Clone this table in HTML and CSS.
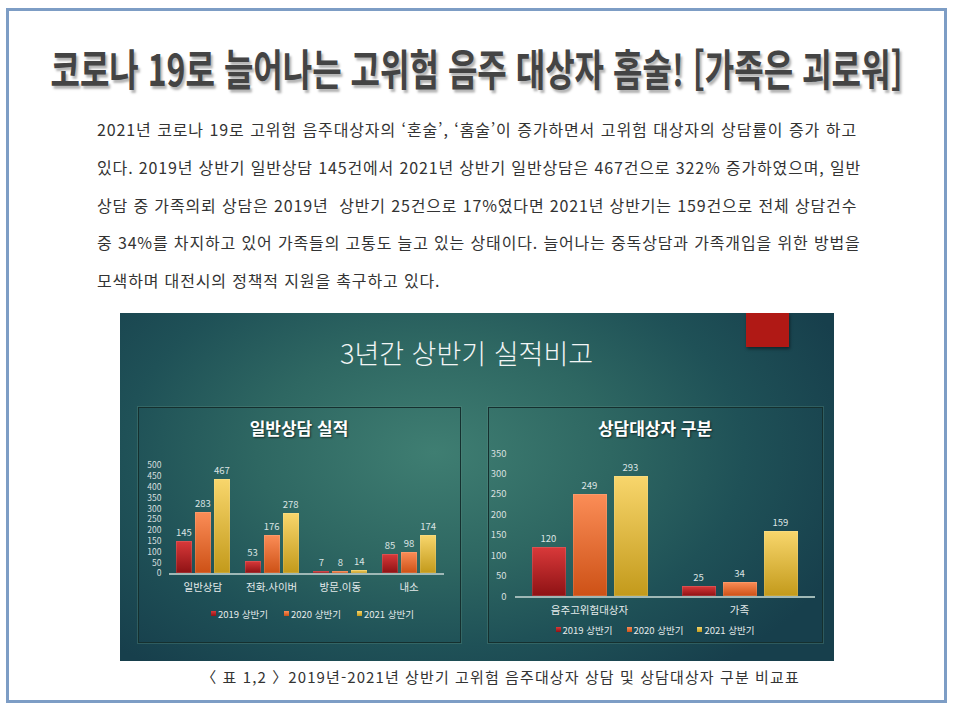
FILE: index.html
```html
<!DOCTYPE html>
<html lang="ko">
<head>
<meta charset="utf-8">
<title>코로나 19로 늘어나는 고위험 음주 대상자 홈술</title>
<link rel="stylesheet" href="styles.css">
</head>
<body>
<div class="frame">
  <h1 class="headline"><span class="headline-text">코로나 19로 늘어나는 고위험 음주 대상자 홈술! [가족은 괴로워]</span></h1>

  <div class="article">
    <p class="ln">2021년 코로나 19로 고위험 음주대상자의 ‘혼술’, ‘홈술’이 증가하면서 고위험 대상자의 상담률이 증가 하고</p>
    <p class="ln">있다. 2019년 상반기 일반상담 145건에서 2021년 상반기 일반상담은 467건으로 322% 증가하였으며, 일반</p>
    <p class="ln">상담 중 가족의뢰 상담은 2019년&nbsp; 상반기 25건으로 17%였다면 2021년 상반기는 159건으로 전체 상담건수</p>
    <p class="ln">중 34%를 차지하고 있어 가족들의 고통도 늘고 있는 상태이다. 늘어나는 중독상담과 가족개입을 위한 방법을</p>
    <p class="ln last">모색하며 대전시의 정책적 지원을 촉구하고 있다.</p>
  </div>

  <figure class="figure">
    <div class="slide">
      <div class="accent"></div>
      <h2 class="slide-title">3년간 상반기 실적비고</h2>
      <div class="panels">
        <section class="panel panel-left">
          <h3 class="panel-title">일반상담 실적</h3>
          <div class="plot-row">
            <div class="yaxis">
              <span>500</span><span>450</span><span>400</span><span>350</span><span>300</span><span>250</span><span>200</span><span>150</span><span>100</span><span>50</span><span>0</span>
            </div>
            <div class="plot">
              <div class="bars">
                <div class="group">
                  <div class="bar"><span class="val">145</span><i class="fill c19" style="height:31.3px"></i></div>
                  <div class="bar"><span class="val">283</span><i class="fill c20" style="height:61.1px"></i></div>
                  <div class="bar"><span class="val">467</span><i class="fill c21" style="height:100.9px"></i></div>
                </div>
                <div class="group">
                  <div class="bar"><span class="val">53</span><i class="fill c19" style="height:11.4px"></i></div>
                  <div class="bar"><span class="val">176</span><i class="fill c20" style="height:38px"></i></div>
                  <div class="bar"><span class="val">278</span><i class="fill c21" style="height:60px"></i></div>
                </div>
                <div class="group">
                  <div class="bar"><span class="val">7</span><i class="fill c19" style="height:2px"></i></div>
                  <div class="bar"><span class="val">8</span><i class="fill c20" style="height:2.2px"></i></div>
                  <div class="bar"><span class="val">14</span><i class="fill c21" style="height:3.2px"></i></div>
                </div>
                <div class="group">
                  <div class="bar"><span class="val">85</span><i class="fill c19" style="height:18.4px"></i></div>
                  <div class="bar"><span class="val">98</span><i class="fill c20" style="height:21.2px"></i></div>
                  <div class="bar"><span class="val">174</span><i class="fill c21" style="height:37.6px"></i></div>
                </div>
              </div>
            </div>
          </div>
          <div class="cats">
            <span>일반상담</span><span>전화.사이버</span><span>방문.이동</span><span>내소</span>
          </div>
          <div class="legend">
            <span class="key"><i class="sw c19"></i>2019 상반기</span>
            <span class="key"><i class="sw c20"></i>2020 상반기</span>
            <span class="key"><i class="sw c21"></i>2021 상반기</span>
          </div>
        </section>

        <section class="panel panel-right">
          <h3 class="panel-title">상담대상자 구분</h3>
          <div class="plot-row">
            <div class="yaxis">
              <span>350</span><span>300</span><span>250</span><span>200</span><span>150</span><span>100</span><span>50</span><span>0</span>
            </div>
            <div class="plot">
              <div class="bars">
                <div class="group">
                  <div class="bar"><span class="val">120</span><i class="fill c19" style="height:49px"></i></div>
                  <div class="bar"><span class="val">249</span><i class="fill c20" style="height:101.7px"></i></div>
                  <div class="bar"><span class="val">293</span><i class="fill c21" style="height:119.7px"></i></div>
                </div>
                <div class="group">
                  <div class="bar"><span class="val">25</span><i class="fill c19" style="height:10.2px"></i></div>
                  <div class="bar"><span class="val">34</span><i class="fill c20" style="height:13.9px"></i></div>
                  <div class="bar"><span class="val">159</span><i class="fill c21" style="height:65px"></i></div>
                </div>
              </div>
            </div>
          </div>
          <div class="cats">
            <span>음주고위험대상자</span><span>가족</span>
          </div>
          <div class="legend">
            <span class="key"><i class="sw c19"></i>2019 상반기</span>
            <span class="key"><i class="sw c20"></i>2020 상반기</span>
            <span class="key"><i class="sw c21"></i>2021 상반기</span>
          </div>
        </section>
      </div>
    </div>
    <figcaption class="caption">〈 표 1,2 〉2019년-2021년 상반기 고위험 음주대상자 상담 및 상담대상자 구분 비교표</figcaption>
  </figure>
</div>
</body>
</html>
```

FILE: styles.css
```css
* { box-sizing: border-box; }

html, body {
  margin: 0;
  padding: 0;
  background: #ffffff;
}

body {
  font-family: "Noto Sans CJK KR", "Noto Sans", sans-serif;
  color: #333333;
}

.frame {
  margin: 8px 6px 0 6px;
  width: 941px;
  height: 695px;
  border: 3px solid #7d9dc5;
  background: #ffffff;
}

/* headline */
.headline {
  margin: 0;
  padding-top: 31px;
  height: 81px;
  text-align: center;
  font-size: 32px;
  line-height: 50px;
  font-weight: 700;
  color: #444444;
  letter-spacing: 0;
}

.headline-text {
  display: inline-block;
  transform: scaleY(1.35);
  text-shadow: 2px 2px 2px rgba(0, 0, 0, 0.3);
}

/* article text */
.article {
  margin: 19px 0 0 88px;
  width: 760px;
}

.ln {
  margin: 0;
  font-size: 16px;
  line-height: 37.75px;
  letter-spacing: 0.85px;
  color: #333333;
  text-align: justify;
  text-align-last: justify;
  white-space: nowrap;
}

.ln.last {
  text-align: left;
  text-align-last: left;
}

/* figure */
.figure {
  margin: 13px 0 0 0;
}

.slide {
  position: relative;
  width: 714px;
  height: 348px;
  margin: 0 auto;
  padding-top: 22px;
  background:
    radial-gradient(ellipse 62% 80% at 44% 40%, #3f7e72 0%, #2e6762 40%, #1f5157 70%, #173f4c 100%);
  color: #ffffff;
  overflow: hidden;
}

.accent {
  position: absolute;
  left: 626px;
  top: 0;
  width: 43px;
  height: 34px;
  background: #b01915;
  box-shadow: 1px 2px 3px rgba(0, 0, 0, 0.45);
}

.slide-title {
  margin: 0 0 36px 0;
  padding-right: 20px;
  text-align: center;
  font-size: 27px;
  line-height: 36px;
  font-weight: 300;
  color: #f2f5f5;
}

.panels {
  display: flex;
  gap: 27px;
  padding-left: 18px;
}

.panel {
  height: 236px;
  padding-top: 8px;
  display: flex;
  flex-direction: column;
  border: 1px solid #15302f;
  box-shadow: 0 0 0 1px rgba(90, 140, 130, 0.35);
}

.panel-left { width: 323px; }
.panel-right { width: 335px; }

.panel-title {
  margin: -1px 0 0 0;
  text-align: center;
  font-size: 17px;
  line-height: 26px;
  font-weight: 700;
  color: #ffffff;
  text-shadow: 1px 1px 2px rgba(0, 0, 0, 0.6);
}

.plot-row {
  display: flex;
}

.yaxis {
  display: flex;
  flex-direction: column;
  justify-content: space-between;
  text-align: right;
  font-size: 9.5px;
  color: #d6dfdf;
}

.plot {
  position: relative;
}

.bars {
  display: flex;
  border-bottom: 2px solid #9fb8b6;
}

.group {
  flex: 1;
  display: flex;
  justify-content: center;
  align-items: flex-end;
  height: 100%;
}

.bar {
  height: 100%;
  display: flex;
  flex-direction: column;
  justify-content: flex-end;
  align-items: center;
}

.val {
  font-size: 9.5px;
  line-height: 10px;
  margin-bottom: 4px;
  color: #dbe3e3;
  white-space: nowrap;
}

.fill {
  display: block;
  width: 100%;
  box-shadow: inset 0 0 0 1px rgba(255, 255, 255, 0.12);
}

.c19 { background: linear-gradient(to bottom, #d9393a, #8e1214); }
.c20 { background: linear-gradient(to bottom, #fb8d57, #cd5116); }
.c21 { background: linear-gradient(to bottom, #f8d66c, #c39a1b); }

.cats {
  display: flex;
  font-size: 10.5px;
  line-height: 14px;
  color: #e4eaea;
}

.cats span {
  flex: 1;
  text-align: center;
  white-space: nowrap;
}

.legend {
  display: flex;
  justify-content: center;
  font-size: 9.5px;
  line-height: 12px;
  color: #e4eaea;
  white-space: nowrap;
}

.key {
  display: flex;
  align-items: center;
}

.sw {
  display: inline-block;
  width: 5px;
  height: 5px;
  margin-right: 2px;
}

/* left panel geometry */
.panel-left .plot-row { margin-top: 18.6px; }
.panel-left .yaxis { width: 23px; height: 118.8px; font-size: 8.5px; line-height: 10.8px; }
.panel-left .plot { width: 275px; margin-left: 7px; padding-top: 5.4px; }
.panel-left .bars { height: 110px; }
.panel-left .group { gap: 3px; }
.panel-left .bar { width: 16px; }
.panel-left .cats { margin: 1.6px 0 0 30px; width: 275px; }
.panel-left .legend { margin-top: 14px; padding-left: 27px; gap: 16px; }

/* right panel geometry */
.panel-right .plot-row { margin-top: 1.8px; }
.panel-right .yaxis { width: 18px; height: 163.4px; line-height: 20.43px; }
.panel-right .plot { width: 300px; margin-left: 8px; padding-top: 10.2px; }
.panel-right .bars { height: 145px; }
.panel-right .group { gap: 7px; }
.panel-right .bar { width: 34px; }
.panel-right .cats { margin: -3.2px 0 0 26px; width: 300px; }
.panel-right .legend { margin-top: 7px; gap: 14px; }

.caption {
  margin: 6px 0 0 0;
  padding-left: 48px;
  text-align: center;
  font-size: 15px;
  line-height: 20px;
  letter-spacing: 1.1px;
  color: #333333;
}
```
